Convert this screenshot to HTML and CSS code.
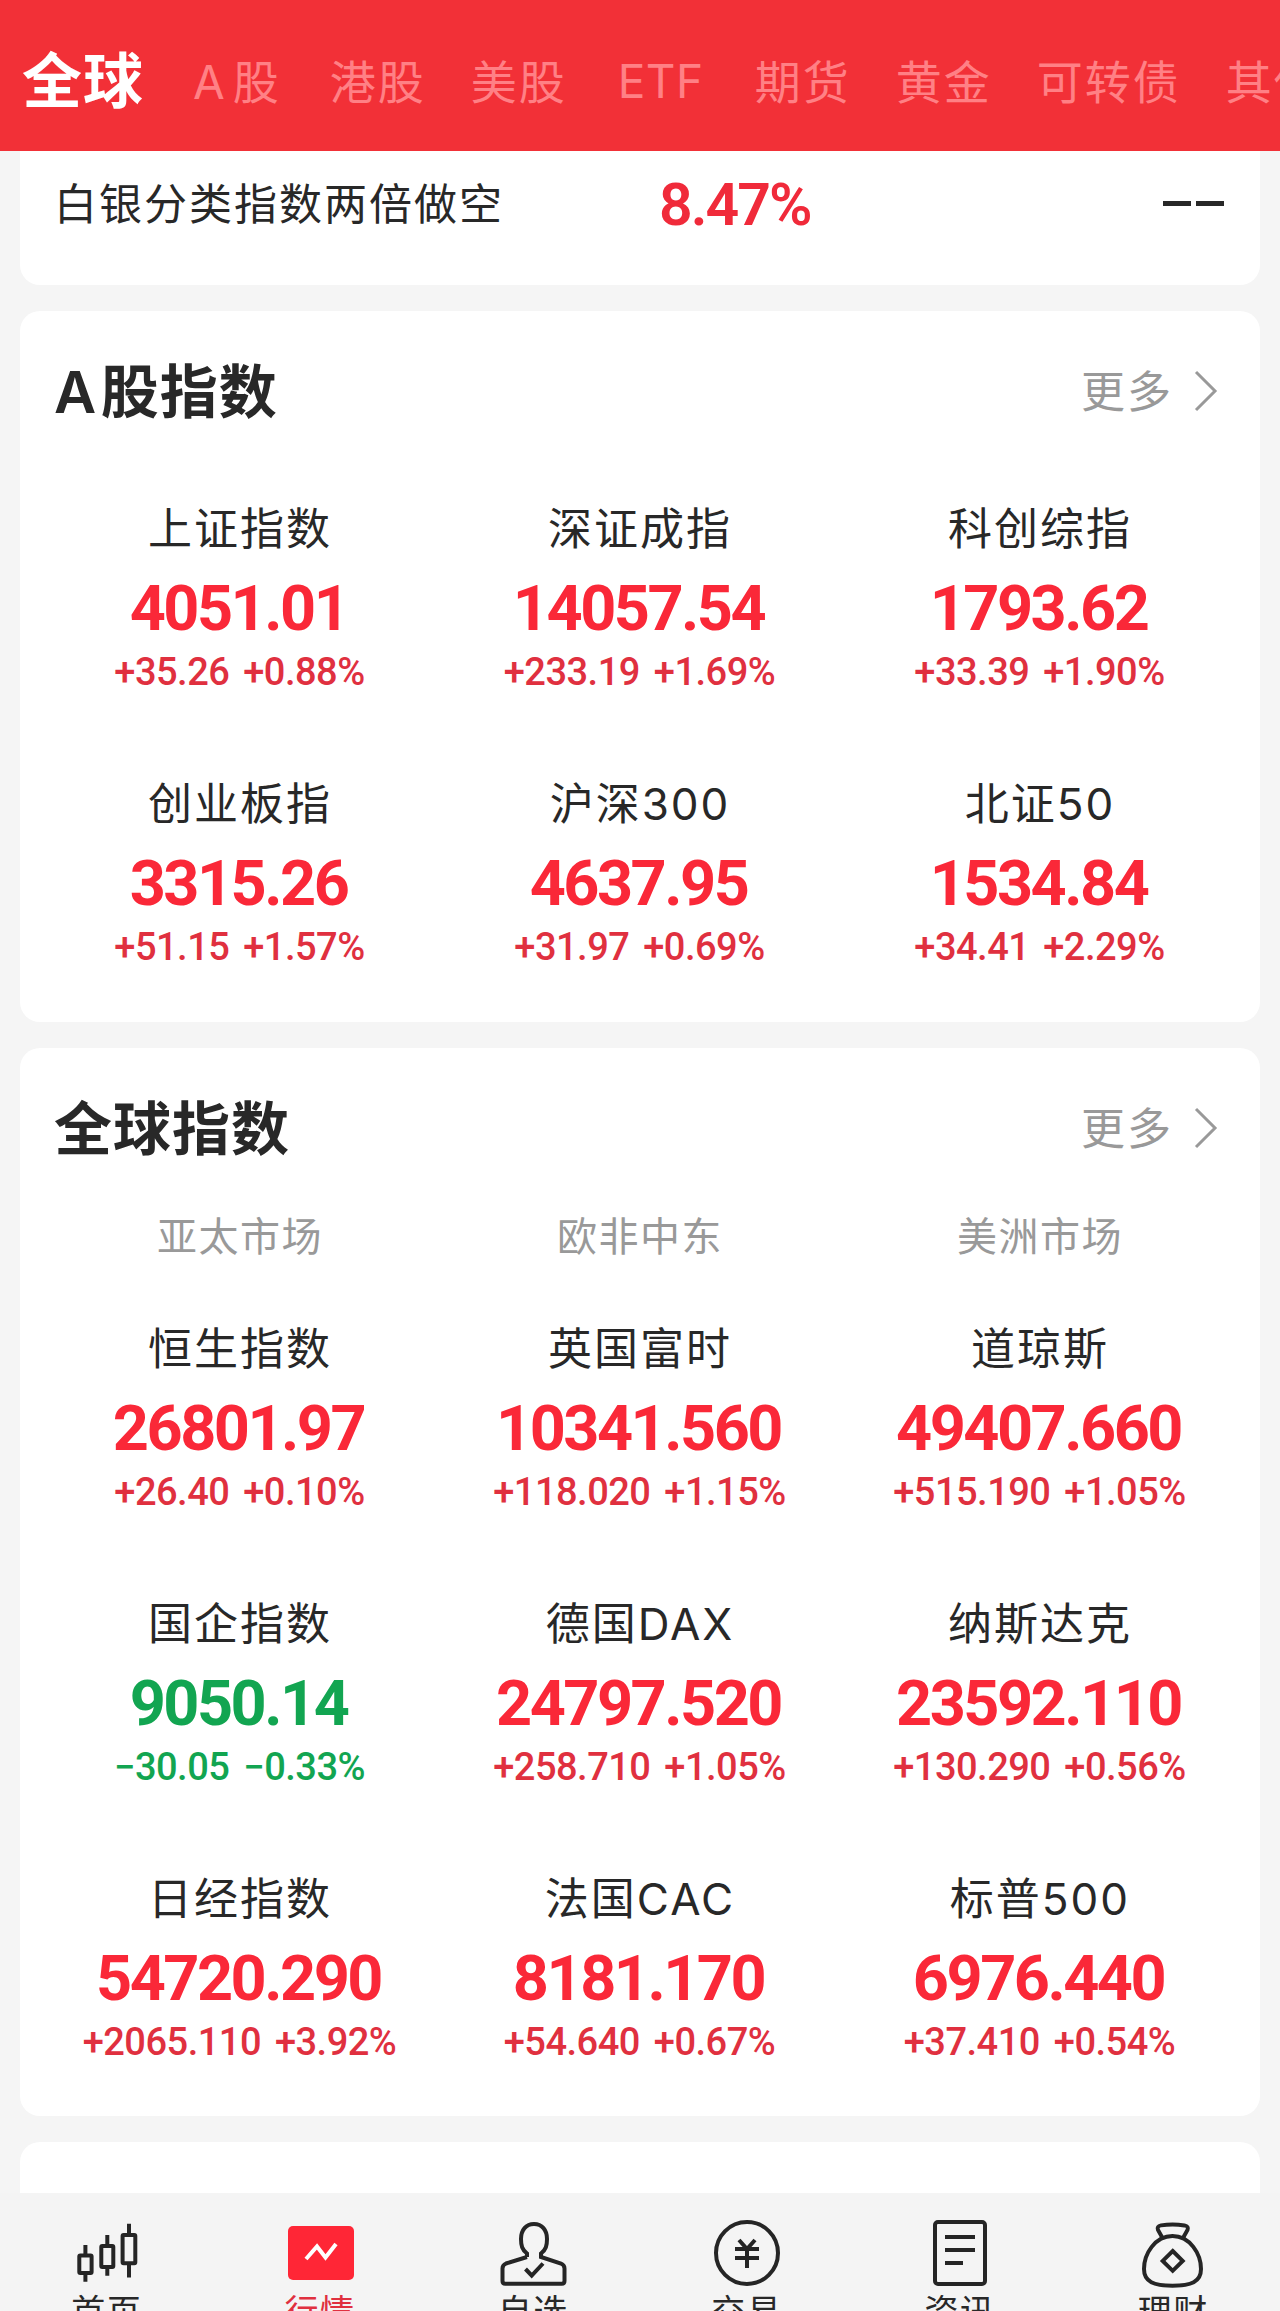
FILE: index.html
```html
<!DOCTYPE html>
<html lang="zh-CN">
  <head>
    <meta charset="UTF-8" />
    <meta name="viewport" content="width=device-width, initial-scale=1.0" />
    <title>行情</title>
    <link rel="stylesheet" href="styles.css">
  </head>
  <body>
    <header class="tabs">
      <span class="tab active">全球</span>
      <span class="tab ashareTab">A 股</span>
      <span class="tab">港股</span>
      <span class="tab">美股</span>
      <span class="tab etf">ETF</span>
      <span class="tab">期货</span>
      <span class="tab">黄金</span>
      <span class="tab">可转债</span>
      <span class="tab">其他</span>
    </header>

    <main class="content">
      <section class="card fund">
        <span class="fundName">白银分类指数两倍做空</span>
        <span class="fundRate">8.47%</span>
        <span class="fundDash"><i></i><i></i></span>
      </section>

      <section class="card ashare">
        <div class="cardHead">
          <h2>A 股指数</h2>
          <a class="more">更多
            <svg width="24" height="42" viewBox="0 0 24 42"><path d="M2 2l19 19L2 40" /></svg>
          </a>
        </div>
        <div class="grid">
          <div class="item"><h3>上证指数</h3><strong>4051.01</strong><p>+35.26 +0.88%</p></div>
          <div class="item"><h3>深证成指</h3><strong>14057.54</strong><p>+233.19 +1.69%</p></div>
          <div class="item"><h3>科创综指</h3><strong>1793.62</strong><p>+33.39 +1.90%</p></div>
          <div class="item"><h3>创业板指</h3><strong>3315.26</strong><p>+51.15 +1.57%</p></div>
          <div class="item"><h3>沪深300</h3><strong>4637.95</strong><p>+31.97 +0.69%</p></div>
          <div class="item"><h3>北证50</h3><strong>1534.84</strong><p>+34.41 +2.29%</p></div>
        </div>
      </section>

      <section class="card global">
        <div class="cardHead">
          <h2>全球指数</h2>
          <a class="more">更多
            <svg width="24" height="42" viewBox="0 0 24 42"><path d="M2 2l19 19L2 40" /></svg>
          </a>
        </div>
        <div class="markets">
          <span>亚太市场</span>
          <span>欧非中东</span>
          <span>美洲市场</span>
        </div>
        <div class="grid">
          <div class="item"><h3>恒生指数</h3><strong>26801.97</strong><p>+26.40 +0.10%</p></div>
          <div class="item"><h3>英国富时</h3><strong>10341.560</strong><p>+118.020 +1.15%</p></div>
          <div class="item"><h3>道琼斯</h3><strong>49407.660</strong><p>+515.190 +1.05%</p></div>
          <div class="item down"><h3>国企指数</h3><strong>9050.14</strong><p>−30.05 −0.33%</p></div>
          <div class="item"><h3>德国DAX</h3><strong>24797.520</strong><p>+258.710 +1.05%</p></div>
          <div class="item"><h3>纳斯达克</h3><strong>23592.110</strong><p>+130.290 +0.56%</p></div>
          <div class="item"><h3>日经指数</h3><strong>54720.290</strong><p>+2065.110 +3.92%</p></div>
          <div class="item"><h3>法国CAC</h3><strong>8181.170</strong><p>+54.640 +0.67%</p></div>
          <div class="item"><h3>标普500</h3><strong>6976.440</strong><p>+37.410 +0.54%</p></div>
        </div>
      </section>

      <section class="card next"></section>
    </main>

    <nav class="bottomNav">
      <a class="navItem">
        <svg viewBox="0 0 72 72">
          <rect x="8.300" y="36.500" width="12.300" height="17.500" rx="1" />
          <rect x="30.300" y="27" width="12" height="21" rx="1" />
          <rect x="51.600" y="16" width="12.700" height="28.300" rx="1" />
          <path d="M14.400 26v10M14.400 54v8.700M36.300 16v11M36.300 48v8.700M58 4.700v11M58 44.500v14" />
        </svg>
        <span>首页</span>
      </a>
      <a class="navItem current">
        <svg viewBox="0 0 72 72">
          <rect class="solid" x="4" y="7" width="66" height="54" rx="5" />
          <path class="line" d="M22 40l11-12.500 8.500 11L52 25" />
        </svg>
        <span>行情</span>
      </a>
      <a class="navItem">
        <svg viewBox="0 0 72 72">
          <path d="M30 38v-3.500c-5-4-6-8-6-14.500 0-9 5-15 13-15s13 6 13 15c0 6.500-1 10.500-6 14.500V38L64 44.500q3.500 1.500 3.500 5V62q0 2.700-2.700 2.700H8.200Q5.500 64.700 5.500 62V49.500q0-3.500 3.500-5L30 38" />
          <path d="M28.500 50l6.200 6.500L46 44.500" />
        </svg>
        <span>自选</span>
      </a>
      <a class="navItem">
        <svg viewBox="0 0 72 72">
          <circle cx="36" cy="34" r="31" />
          <path d="M28 21l8 9 8-9M24 30h24M24 39h24M36 30v19" />
        </svg>
        <span>交易</span>
      </a>
      <a class="navItem">
        <svg viewBox="0 0 72 72">
          <rect x="11" y="3" width="50" height="62" rx="3" />
          <path d="M21 18h30M21 31h30M21 44h18" />
        </svg>
        <span>资讯</span>
      </a>
      <a class="navItem">
        <svg viewBox="0 0 72 72">
          <path d="M25.500 19l-4.500-8c-1-2.500 0-4 3-4.600 8-1.300 15-1.300 23.500 0 3 .6 4 2.100 3 4.600l-4.500 8" />
          <path d="M35.500 17C18 17 7 35 7 50c0 13 10 16.700 28.500 16.700S64 63 64 50c0-15-11-33-28.500-33z" />
          <path d="M35.700 32l10 9.900-10 9.900-10-9.900z" />
        </svg>
        <span>理财</span>
      </a>
    </nav>
  </body>
</html>
```

FILE: styles.css
```css
* {
  margin: 0;
  padding: 0;
  box-sizing: border-box;
}

body {
  height: 2311px;
  overflow: hidden;
  display: flex;
  flex-direction: column;
  background: #f5f5f5;
  color: #282828;
  font-family: Inter, "Noto Sans CJK SC", sans-serif;
}

.tabs {
  height: 151px;
  flex: none;
  display: flex;
  align-items: center;
  gap: 45px;
  padding: 6px 0 0 22px;
  overflow: hidden;
  white-space: nowrap;
  background: #f23037;
}

.tab {
  flex: none;
  font-size: 46px;
  letter-spacing: 2px;
  word-spacing: -9px;
  color: #ff8085;
}

.tab.active {
  margin: -4px 4px 0 0;
  font-size: 60px;
  font-weight: 700;
  letter-spacing: 1px;
  color: #fff;
}

.tab.ashareTab {
  margin-right: 4px;
}

.tab.etf {
  margin-top: 4px;
  padding: 0 6px;
  letter-spacing: 0.5px;
}

.content {
  height: 2042px;
  flex: none;
  overflow: hidden;
  display: flex;
  flex-direction: column;
  gap: 26px;
  padding: 0 20px;
}

.card {
  flex: none;
  background: #fff;
  border-radius: 20px;
  padding: 0 35px 0 34px;
}

.fund {
  height: 134px;
  display: flex;
  align-items: flex-start;
  border-radius: 0 0 20px 20px;
}

.fundName {
  width: 605px;
  line-height: 106px;
  font-size: 43px;
  letter-spacing: 2px;
}

.fundRate {
  flex: 1;
  line-height: 107px;
  font-family: Roboto, sans-serif;
  font-size: 59px;
  font-weight: 600;
  letter-spacing: -2px;
  color: #f02a3a;
}

.fundDash {
  display: flex;
  gap: 5px;
  padding: 50px 1px 0 0;
}

.fundDash i {
  width: 28px;
  height: 5px;
  background: #282828;
}

.ashare {
  height: 711px;
}

.global {
  height: 1068px;
}

.next {
  height: 100px;
}

.cardHead {
  height: 160px;
  display: flex;
  justify-content: space-between;
  align-items: center;
}

.cardHead h2 {
  margin-top: -6px;
  font-size: 58px;
  font-weight: 600;
  letter-spacing: 1px;
  word-spacing: -12px;
}

.more {
  display: flex;
  align-items: center;
  gap: 21px;
  margin-top: -5px;
  font-size: 44px;
  letter-spacing: 2px;
  color: #999;
}

.more svg {
  margin: 5px 7px 0 0;
  fill: none;
  stroke: #999;
  stroke-width: 3;
}

.markets,
.grid {
  display: grid;
  grid-template-columns: repeat(3, 400px);
  margin: 0 -14px;
  text-align: center;
}

.markets {
  margin-bottom: 25px;
}

.markets span {
  line-height: 58px;
  font-size: 40px;
  letter-spacing: 1.5px;
  color: #999;
}

.item {
  height: 275px;
  padding-top: 28px;
  color: #fa2838;
}

.item h3 {
  line-height: 60px;
  font-size: 44px;
  font-weight: 400;
  letter-spacing: 2px;
  color: #282828;
}

.item strong {
  display: block;
  margin-top: 16px;
  padding-right: 3px;
  line-height: 68px;
  font-family: Roboto, sans-serif;
  font-size: 63px;
  font-weight: 700;
  letter-spacing: -2.5px;
}

.item p {
  padding-right: 1px;
  line-height: 58px;
  font-family: Roboto, sans-serif;
  font-size: 38px;
  font-weight: 500;
  letter-spacing: -0.5px;
  word-spacing: 5px;
  color: #e0303f;
}

.item.down strong,
.item.down p {
  color: #12a551;
}

.bottomNav {
  height: 118px;
  flex: none;
  display: flex;
  background: #f4f4f4;
  overflow: hidden;
}

.navItem {
  flex: 1;
  display: flex;
  flex-direction: column;
  align-items: center;
  padding-top: 26px;
}

.navItem svg {
  width: 72px;
  height: 72px;
  flex: none;
  fill: none;
  stroke: #252525;
  stroke-width: 4;
}

.navItem span {
  line-height: 42px;
  font-size: 34px;
  letter-spacing: 1.5px;
}

.navItem.current {
  color: #e0303f;
}

.navItem .solid {
  fill: #ff2636;
  stroke: none;
}

.navItem .line {
  stroke: #fff;
}
```
